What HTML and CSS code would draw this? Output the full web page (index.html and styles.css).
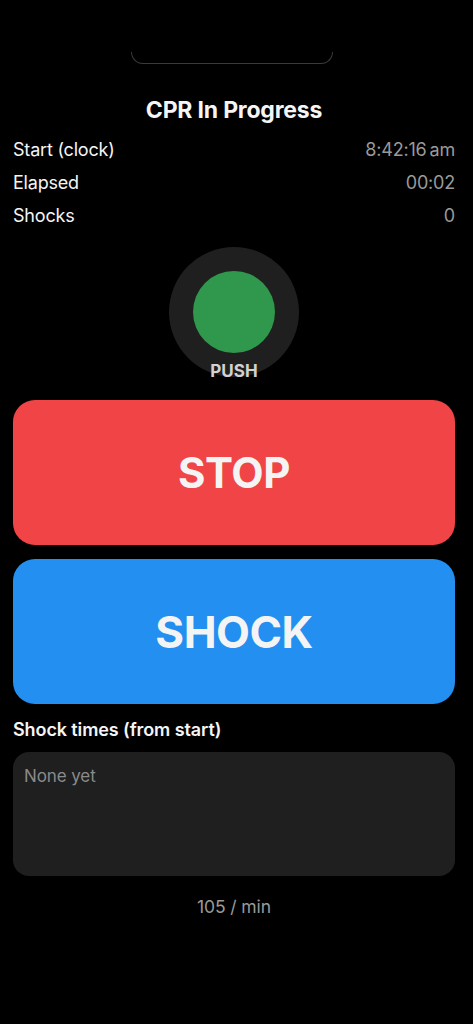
FILE: index.html
```html
<!DOCTYPE html>
<html>
<head>
<meta charset="utf-8">
<link rel="stylesheet" href="styles.css">
</head>
<body>
<div class="screen">
  <div class="notch"></div>
  <h1 class="title">CPR In Progress</h1>
  <div class="stats">
    <div class="row"><span class="label">Start (clock)</span><span class="value">8:42:16<span class="ampm">am</span></span></div>
    <div class="row"><span class="label">Elapsed</span><span class="value">00:02</span></div>
    <div class="row"><span class="label">Shocks</span><span class="value">0</span></div>
  </div>
  <div class="pulse">
    <div class="ring"><div class="dot"></div></div>
    <div class="push">PUSH</div>
  </div>
  <button class="btn btn-stop">STOP</button>
  <button class="btn btn-shock">SHOCK</button>
  <div class="section-label">Shock times (from start)</div>
  <div class="times">None yet</div>
  <div class="rate">105 / min</div>
</div>
</body>
</html>
```
FILE: styles.css
```css
html, body {
  margin: 0;
  padding: 0;
  background: #000;
}
body {
  font-family: Inter, "Noto Sans", "Liberation Sans", sans-serif;
  color: #f5f5f5;
}
.screen {
  width: 473px;
  min-height: 1024px;
  padding: 0 18px 0 13px;
  box-sizing: border-box;
  display: flex;
  flex-direction: column;
}
.notch {
  align-self: center;
  width: 202px;
  height: 12px;
  margin-top: 52px;
  margin-right: 4px;
  border: 1.5px solid #3a3a3a;
  border-top: none;
  border-radius: 0 0 14px 14px;
  box-sizing: border-box;
}
.title {
  margin: 32px 0 0;
  text-align: center;
  font-size: 23px;
  line-height: 28px;
  font-weight: 700;
  letter-spacing: -0.2px;
}
.stats {
  margin-top: 9px;
  display: flex;
  flex-direction: column;
}
.row {
  display: flex;
  justify-content: space-between;
  align-items: center;
  height: 33px;
  font-size: 18px;
  letter-spacing: -0.2px;
}
.label {
  color: #f5f5f5;
}
.value {
  color: #9a9a9a;
}
.ampm {
  margin-left: 3px;
}
.pulse {
  margin-top: 15px;
  display: flex;
  flex-direction: column;
  align-items: center;
}
.ring {
  width: 130px;
  height: 130px;
  border-radius: 50%;
  background: #1f1f1f;
  display: flex;
  align-items: center;
  justify-content: center;
}
.dot {
  width: 82px;
  height: 82px;
  border-radius: 50%;
  background: #30984c;
}
.push {
  margin-top: -16px;
  font-size: 17px;
  line-height: 20px;
  font-weight: 700;
  color: #d2d2d2;
}
.btn {
  display: flex;
  align-items: center;
  justify-content: center;
  width: 442px;
  height: 145px;
  border: none;
  border-radius: 22px;
  font-family: inherit;
  font-weight: 700;
  color: #f4f4f4;
  padding: 0;
  letter-spacing: -0.5px;
}
.btn-stop {
  margin-top: 19px;
  background: #f04446;
  font-size: 42px;
}
.btn-shock {
  margin-top: 14px;
  background: #238ff0;
  font-size: 44px;
}
.section-label {
  margin-top: 15px;
  font-size: 18px;
  line-height: 22px;
  font-weight: 600;
  letter-spacing: -0.1px;
}
.times {
  margin-top: 11px;
  width: 442px;
  height: 124px;
  box-sizing: border-box;
  background: #1f1f1f;
  border-radius: 16px;
  padding: 13px 11px;
  font-size: 17px;
  line-height: 22px;
  color: #8a8a8a;
  letter-spacing: -0.1px;
}
.rate {
  margin-top: 20px;
  text-align: center;
  font-size: 17.5px;
  line-height: 22px;
  color: #9a9a9a;
  letter-spacing: -0.1px;
}
```
